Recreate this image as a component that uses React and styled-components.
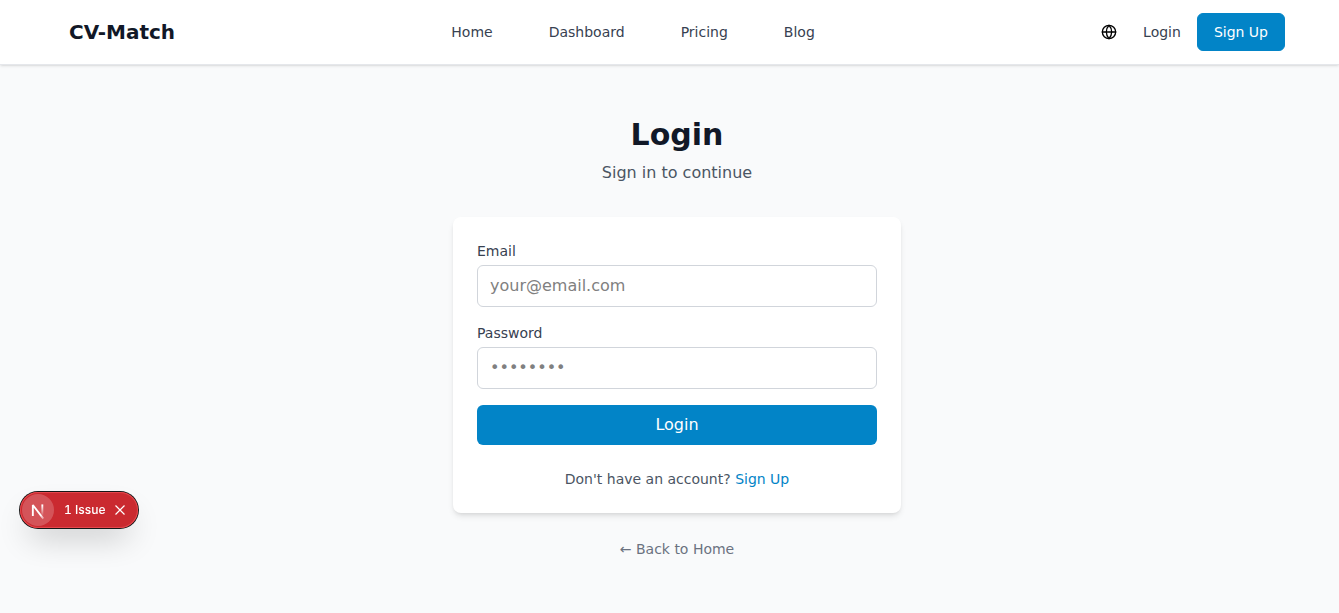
import React from 'react';
import styled, { createGlobalStyle } from 'styled-components';
import { Globe } from 'lucide-react';

const GlobalStyle = createGlobalStyle`
  *, *::before, *::after { box-sizing: border-box; }
  body {
    margin: 0;
    background: #f9fafb;
    color: #111827;
    font-family: "DejaVu Sans", sans-serif;
    font-size: 16px;
    line-height: 24px;
  }
  h1, p { margin: 0; }
  a { color: inherit; text-decoration: none; }
  button, input { font: inherit; }
`;

const Header = styled.header`
  position: relative;
  padding-left: 15px;
  background: #fff;
  border-bottom: 1px solid #e5e7eb;
  box-shadow: 0 1px 3px rgba(0, 0, 0, 0.1), 0 1px 2px -1px rgba(0, 0, 0, 0.1);
`;

const HeaderInner = styled.div`
  display: flex;
  align-items: center;
  justify-content: space-between;
  max-width: 1280px;
  height: 64px;
  margin: 0 auto;
  padding: 0 32px;
`;

const Brand = styled.a`
  font-size: 20px;
  line-height: 28px;
  font-weight: 700;
`;

const Nav = styled.nav`
  display: flex;
  gap: 32px;
`;

const NavLink = styled.a`
  padding: 8px 12px;
  font-size: 14px;
  line-height: 20px;
  color: #374151;
`;

const Actions = styled.div`
  display: flex;
  align-items: center;
  gap: 16px;
`;

const IconButton = styled.button`
  display: flex;
  padding: 10px;
  border: 0;
  background: transparent;
  color: #000;
  cursor: pointer;
`;

const LoginLink = styled.a`
  font-size: 14px;
  line-height: 20px;
  color: #374151;
`;

const SignUpLink = styled.a`
  padding: 8px 16px;
  border: 1px solid #0284c7;
  border-radius: 6px;
  background: #0284c7;
  color: #fff;
  font-size: 14px;
  line-height: 20px;
`;

const Main = styled.main`
  display: flex;
  flex-direction: column;
  align-items: center;
  justify-content: center;
  min-height: calc(100vh - 65px);
  padding: 48px 0 48px 15px;
`;

const Title = styled.h1`
  font-size: 30px;
  line-height: 36px;
  font-weight: 700;
`;

const Subtitle = styled.p`
  margin-top: 8px;
  color: #4b5563;
`;

const Card = styled.section`
  width: 100%;
  max-width: 448px;
  margin: 32px 0 24px;
  padding: 24px;
  border-radius: 8px;
  background: #fff;
  box-shadow: 0 4px 6px -1px rgba(0, 0, 0, 0.1), 0 2px 4px -2px rgba(0, 0, 0, 0.1);
`;

const Form = styled.form`
  display: flex;
  flex-direction: column;
  gap: 16px;
`;

const Field = styled.div`
  display: flex;
  flex-direction: column;
  gap: 4px;
`;

const Label = styled.label`
  font-size: 14px;
  line-height: 20px;
  color: #374151;
`;

const Input = styled.input`
  width: 100%;
  padding: 8px 12px;
  border: 1px solid #d1d5db;
  border-radius: 6px;
  background: #fff;
  color: #111827;
  &::placeholder { color: #808080; }
`;

const Submit = styled.button`
  padding: 8px 16px;
  border: 0;
  border-radius: 6px;
  background: #0284c7;
  color: #fff;
  cursor: pointer;
`;

const Prompt = styled.p`
  margin-top: 24px;
  text-align: center;
  font-size: 14px;
  line-height: 20px;
  color: #4b5563;
  a { color: #0284c7; }
`;

const BackLink = styled.a`
  font-size: 14px;
  color: #6b7280;
`;

const IssueBadge = styled.div`
  position: fixed;
  left: 20px;
  bottom: 85px;
  display: flex;
  align-items: center;
  height: 36px;
  padding: 2px;
  border-radius: 18px;
  background: #ca2a30;
  color: #fff;
  font-family: Inter, sans-serif;
  font-size: 12px;
  line-height: 16px;
  font-weight: 500;
  font-variant-numeric: tabular-nums;
  box-shadow: 0 0 0 1px #171717, inset 0 0 0 1px #e5484d,
    0 16px 32px -8px rgba(0, 0, 0, 0.24);
`;

const BadgeButton = styled.button`
  display: flex;
  padding: 0;
  border: 0;
  border-radius: 16px;
  background: ${(p) => (p.$disc ? 'rgba(255, 255, 255, 0.2)' : 'transparent')};
  color: inherit;
  cursor: pointer;
`;

const IssueButton = styled(BadgeButton)`
  padding: 0 9px 0 10px;
`;

const CloseButton = styled(BadgeButton)`
  padding: 1px 10px 1px 0;
`;

const links = ['Home', 'Dashboard', 'Pricing', 'Blog'];

function NextLogo() {
  return (
    <svg width="32" height="32" viewBox="0 0 32 32" fill="none" aria-hidden="true">
      <defs>
        <linearGradient id="diagonal" x1="9.95" y1="11.13" x2="15.76" y2="18.33" gradientUnits="userSpaceOnUse">
          <stop stopColor="#fff" />
          <stop offset="0.8" stopColor="#fff" stopOpacity="0" />
        </linearGradient>
        <linearGradient id="stem" x1="11.82" y1="1.4" x2="11.79" y2="12" gradientUnits="userSpaceOnUse">
          <stop stopColor="#fff" />
          <stop offset="1" stopColor="#fff" stopOpacity="0" />
        </linearGradient>
      </defs>
      <g transform="translate(8.5 10)">
        <path d="M12.8 14.6 2.34 1v11" stroke="url(#diagonal)" strokeWidth="1.86" strokeLinejoin="bevel" />
        <path d="M11.825 0.4v11.6" stroke="url(#stem)" strokeWidth="1.86" />
      </g>
    </svg>
  );
}

export default function App() {
  return (
    <>
      <GlobalStyle />
      <Header>
        <HeaderInner>
          <Brand href="#">CV-Match</Brand>
          <Nav>
            {links.map((name) => (
              <NavLink href="#" key={name}>{name}</NavLink>
            ))}
          </Nav>
          <Actions>
            <IconButton type="button" aria-label="Change language">
              <Globe size={16} />
            </IconButton>
            <LoginLink href="#">Login</LoginLink>
            <SignUpLink href="#">Sign Up</SignUpLink>
          </Actions>
        </HeaderInner>
      </Header>
      <Main>
        <Title>Login</Title>
        <Subtitle>Sign in to continue</Subtitle>
        <Card>
          <Form onSubmit={(e) => e.preventDefault()}>
            <Field>
              <Label htmlFor="email">Email</Label>
              <Input id="email" type="email" placeholder="your@email.com" />
            </Field>
            <Field>
              <Label htmlFor="password">Password</Label>
              <Input id="password" type="password" placeholder="••••••••" />
            </Field>
            <Submit type="submit">Login</Submit>
          </Form>
          <Prompt>
            Don't have an account? <a href="#">Sign Up</a>
          </Prompt>
        </Card>
        <BackLink href="#">← Back to Home</BackLink>
      </Main>
      <IssueBadge>
        <BadgeButton $disc type="button" aria-label="Open developer tools">
          <NextLogo />
        </BadgeButton>
        <IssueButton type="button">1 Issue</IssueButton>
        <CloseButton type="button" aria-label="Dismiss">
          <svg width="12" height="12" viewBox="0 0 12 12" fill="none" stroke="currentColor" strokeWidth="1.2" aria-hidden="true">
            <path d="M1.5 1.5l9 9M10.5 1.5l-9 9" />
          </svg>
        </CloseButton>
      </IssueBadge>
    </>
  );
}
